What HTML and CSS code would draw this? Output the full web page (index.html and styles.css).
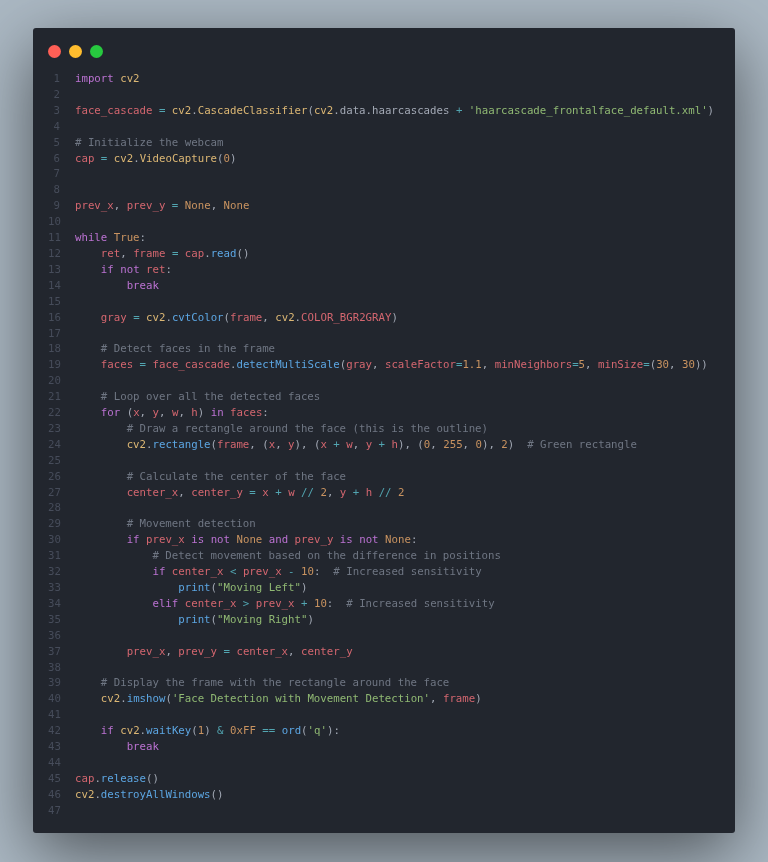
FILE: index.html
```html
<!DOCTYPE html>
<html lang="en">
<head>
<meta charset="utf-8">
<title>Code</title>
<link rel="stylesheet" href="styles.css">
</head>
<body>
<main class="window">
<header class="titlebar"><span class="dot red"></span><span class="dot yellow"></span><span class="dot green"></span></header>
<div class="code">
<div class="line"><span class="ln">1</span><span class="src"><span class="k">import</span> <span class="c">cv2</span></span></div>
<div class="line"><span class="ln">2</span></div>
<div class="line"><span class="ln">3</span><span class="src"><span class="v">face_cascade</span> <span class="o">=</span> <span class="c">cv2</span>.<span class="c">CascadeClassifier</span>(<span class="c">cv2</span>.data.haarcascades <span class="o">+</span> <span class="s">'haarcascade_frontalface_default.xml'</span>)</span></div>
<div class="line"><span class="ln">4</span></div>
<div class="line"><span class="ln">5</span><span class="src"><span class="m"># Initialize the webcam</span></span></div>
<div class="line"><span class="ln">6</span><span class="src"><span class="v">cap</span> <span class="o">=</span> <span class="c">cv2</span>.<span class="c">VideoCapture</span>(<span class="n">0</span>)</span></div>
<div class="line"><span class="ln">7</span></div>
<div class="line"><span class="ln">8</span></div>
<div class="line"><span class="ln">9</span><span class="src"><span class="v">prev_x</span>, <span class="v">prev_y</span> <span class="o">=</span> <span class="n">None</span>, <span class="n">None</span></span></div>
<div class="line"><span class="ln">10</span></div>
<div class="line"><span class="ln">11</span><span class="src"><span class="k">while</span> <span class="n">True</span>:</span></div>
<div class="line"><span class="ln">12</span><span class="src">    <span class="v">ret</span>, <span class="v">frame</span> <span class="o">=</span> <span class="v">cap</span>.<span class="f">read</span>()</span></div>
<div class="line"><span class="ln">13</span><span class="src">    <span class="k">if</span> <span class="k">not</span> <span class="v">ret</span>:</span></div>
<div class="line"><span class="ln">14</span><span class="src">        <span class="k">break</span></span></div>
<div class="line"><span class="ln">15</span></div>
<div class="line"><span class="ln">16</span><span class="src">    <span class="v">gray</span> <span class="o">=</span> <span class="c">cv2</span>.<span class="f">cvtColor</span>(<span class="v">frame</span>, <span class="c">cv2</span>.<span class="v">COLOR_BGR2GRAY</span>)</span></div>
<div class="line"><span class="ln">17</span></div>
<div class="line"><span class="ln">18</span><span class="src">    <span class="m"># Detect faces in the frame</span></span></div>
<div class="line"><span class="ln">19</span><span class="src">    <span class="v">faces</span> <span class="o">=</span> <span class="v">face_cascade</span>.<span class="f">detectMultiScale</span>(<span class="v">gray</span>, <span class="v">scaleFactor</span><span class="o">=</span><span class="n">1.1</span>, <span class="v">minNeighbors</span><span class="o">=</span><span class="n">5</span>, <span class="v">minSize</span><span class="o">=</span>(<span class="n">30</span>, <span class="n">30</span>))</span></div>
<div class="line"><span class="ln">20</span></div>
<div class="line"><span class="ln">21</span><span class="src">    <span class="m"># Loop over all the detected faces</span></span></div>
<div class="line"><span class="ln">22</span><span class="src">    <span class="k">for</span> (<span class="v">x</span>, <span class="v">y</span>, <span class="v">w</span>, <span class="v">h</span>) <span class="k">in</span> <span class="v">faces</span>:</span></div>
<div class="line"><span class="ln">23</span><span class="src">        <span class="m"># Draw a rectangle around the face (this is the outline)</span></span></div>
<div class="line"><span class="ln">24</span><span class="src">        <span class="c">cv2</span>.<span class="f">rectangle</span>(<span class="v">frame</span>, (<span class="v">x</span>, <span class="v">y</span>), (<span class="v">x</span> <span class="o">+</span> <span class="v">w</span>, <span class="v">y</span> <span class="o">+</span> <span class="v">h</span>), (<span class="n">0</span>, <span class="n">255</span>, <span class="n">0</span>), <span class="n">2</span>)  <span class="m"># Green rectangle</span></span></div>
<div class="line"><span class="ln">25</span></div>
<div class="line"><span class="ln">26</span><span class="src">        <span class="m"># Calculate the center of the face</span></span></div>
<div class="line"><span class="ln">27</span><span class="src">        <span class="v">center_x</span>, <span class="v">center_y</span> <span class="o">=</span> <span class="v">x</span> <span class="o">+</span> <span class="v">w</span> <span class="o">//</span> <span class="n">2</span>, <span class="v">y</span> <span class="o">+</span> <span class="v">h</span> <span class="o">//</span> <span class="n">2</span></span></div>
<div class="line"><span class="ln">28</span></div>
<div class="line"><span class="ln">29</span><span class="src">        <span class="m"># Movement detection</span></span></div>
<div class="line"><span class="ln">30</span><span class="src">        <span class="k">if</span> <span class="v">prev_x</span> <span class="k">is</span> <span class="k">not</span> <span class="n">None</span> <span class="k">and</span> <span class="v">prev_y</span> <span class="k">is</span> <span class="k">not</span> <span class="n">None</span>:</span></div>
<div class="line"><span class="ln">31</span><span class="src">            <span class="m"># Detect movement based on the difference in positions</span></span></div>
<div class="line"><span class="ln">32</span><span class="src">            <span class="k">if</span> <span class="v">center_x</span> <span class="o">&lt;</span> <span class="v">prev_x</span> <span class="o">-</span> <span class="n">10</span>:  <span class="m"># Increased sensitivity</span></span></div>
<div class="line"><span class="ln">33</span><span class="src">                <span class="f">print</span>(<span class="s">"Moving Left"</span>)</span></div>
<div class="line"><span class="ln">34</span><span class="src">            <span class="k">elif</span> <span class="v">center_x</span> <span class="o">&gt;</span> <span class="v">prev_x</span> <span class="o">+</span> <span class="n">10</span>:  <span class="m"># Increased sensitivity</span></span></div>
<div class="line"><span class="ln">35</span><span class="src">                <span class="f">print</span>(<span class="s">"Moving Right"</span>)</span></div>
<div class="line"><span class="ln">36</span></div>
<div class="line"><span class="ln">37</span><span class="src">        <span class="v">prev_x</span>, <span class="v">prev_y</span> <span class="o">=</span> <span class="v">center_x</span>, <span class="v">center_y</span></span></div>
<div class="line"><span class="ln">38</span></div>
<div class="line"><span class="ln">39</span><span class="src">    <span class="m"># Display the frame with the rectangle around the face</span></span></div>
<div class="line"><span class="ln">40</span><span class="src">    <span class="c">cv2</span>.<span class="f">imshow</span>(<span class="s">'Face Detection with Movement Detection'</span>, <span class="v">frame</span>)</span></div>
<div class="line"><span class="ln">41</span></div>
<div class="line"><span class="ln">42</span><span class="src">    <span class="k">if</span> <span class="c">cv2</span>.<span class="f">waitKey</span>(<span class="n">1</span>) <span class="o">&amp;</span> <span class="n">0xFF</span> <span class="o">==</span> <span class="f">ord</span>(<span class="s">'q'</span>):</span></div>
<div class="line"><span class="ln">43</span><span class="src">        <span class="k">break</span></span></div>
<div class="line"><span class="ln">44</span></div>
<div class="line"><span class="ln">45</span><span class="src"><span class="v">cap</span>.<span class="f">release</span>()</span></div>
<div class="line"><span class="ln">46</span><span class="src"><span class="c">cv2</span>.<span class="f">destroyAllWindows</span>()</span></div>
<div class="line"><span class="ln">47</span></div>
</div>
</main>
</body>
</html>
```
FILE: styles.css
```css
* { box-sizing: border-box; }
html, body { margin: 0; height: 100%; }
body {
  background: #abb8c3;
  padding: 28px 33px 29px;
  overflow: hidden;
}
.window {
  height: 805px;
  background: #22262e;
  border-radius: 3px;
  box-shadow: 0 20px 68px rgba(0, 0, 0, .55);
  padding: 17px 15px 0;
  filter: blur(.35px);
}
.titlebar {
  display: flex;
  gap: 8px;
  height: 13px;
}
.dot { width: 13px; height: 13px; border-radius: 50%; }
.red { background: #ff5f56; }
.yellow { background: #ffbd2e; }
.green { background: #27c93f; }
.code {
  margin-top: 13px;
  font-family: "DejaVu Sans Mono", monospace;
  font-size: 10.72px;
  line-height: 15.91px;
  color: #a3a9b5;
}
.line {
  display: flex;
  height: 15.91px;
  white-space: pre;
}
.ln {
  flex: none;
  width: 12px;
  margin-right: 15px;
  text-align: right;
  color: #464c5a;
}
.k { color: #bb72d2; }
.c { color: #dcb774; }
.v { color: #d3666f; }
.f { color: #5ca6e3; }
.s { color: #90b973; }
.n { color: #c99360; }
.o { color: #52a5b1; }
.m { color: #6f7683; }
```
